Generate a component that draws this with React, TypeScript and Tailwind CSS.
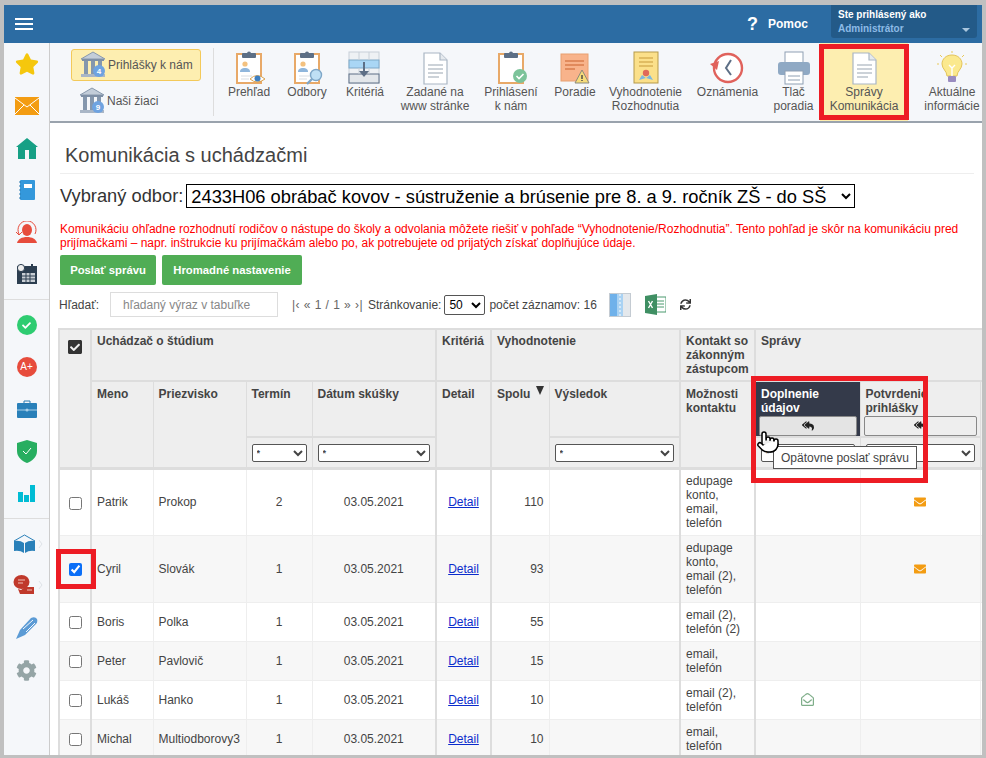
import { FaCheckSquare, FaEnvelope, FaRegEnvelopeOpen, FaReplyAll, FaSync, FaStar, FaCog, FaCheck } from 'react-icons/fa';
import { Pointer } from 'lucide-react';

const Clipboard = ({ children }: { children?: React.ReactNode }) => (
  <svg width="36" height="34" viewBox="0 0 36 34">
    <rect x="6" y="3" width="24" height="29" fill="#fff" stroke="#e8a968" strokeWidth="2" />
    <rect x="11" y="2" width="14" height="5" rx="1" fill="#5d6f86" />
    <circle cx="18" cy="2.5" r="2" fill="#5d6f86" />
    {children}
  </svg>
);

const Person = () => (
  <g>
    <circle cx="14" cy="13" r="2.6" fill="#f3c17f" />
    <path d="M9 21c0-3 2-4 5-4s5 1 5 4z" fill="#8fb6dc" />
    <path d="M10 25h11M10 28h8" stroke="#d8dde3" strokeWidth="1" />
  </g>
);

const Paper = () => (
  <svg width="36" height="34" viewBox="0 0 36 34">
    <path d="M7 2h16l7 7v24H7z" fill="#fff" stroke="#aab6c4" strokeWidth="1.2" />
    <path d="M23 2v7h7" fill="#e6eaee" stroke="#aab6c4" strokeWidth="1.2" />
    <path d="M11 14h15M11 18h15M11 22h15M11 26h11" stroke="#9aa5b1" strokeWidth="1.2" />
  </svg>
);

const Bank = ({ n }: { n: number }) => (
  <svg width="26" height="28" viewBox="0 0 26 28">
    <path d="M1 8 13 1l12 7z" fill="#c3cdd9" stroke="#8899ad" />
    <rect x="2" y="8" width="22" height="2" fill="#7f90a6" />
    <path d="M4 10h4v13H4zM11 10h4v13h-4zM18 10h4v13h-4z" fill="#8597ad" />
    <rect x="1" y="23" width="24" height="3" fill="#a9b6c6" />
    <circle cx="19" cy="20" r="6" fill="#6fa3e0" />
    <text x="19" y="23" fontSize="8" fontWeight="700" fill="#fff" textAnchor="middle">{n}</text>
  </svg>
);

const toolbarIcons: Record<string, React.ReactNode> = {
  prehlad: (
    <Clipboard>
      <Person />
      <path d="M19 28q7-7 15 0q-8 6-15 0z" fill="#fff" stroke="#d9a24f" />
      <circle cx="26.5" cy="27.5" r="3" fill="#3f7fc0" />
    </Clipboard>
  ),
  odbory: (
    <Clipboard>
      <Person />
      <circle cx="27" cy="24" r="5.5" fill="#bfe0f5" stroke="#7ea7c8" strokeWidth="1.4" />
      <path d="M23 28l-5 5" stroke="#7ea7c8" strokeWidth="2.4" />
    </Clipboard>
  ),
  kriteria: (
    <svg width="36" height="34" viewBox="0 0 36 34">
      <rect x="2" y="1" width="30" height="31" fill="#eef1f4" stroke="#c8d0d8" />
      <rect x="2" y="9" width="30" height="8" fill="#a9d6f5" stroke="#7fa9c8" />
      <rect x="2" y="23" width="30" height="9" fill="#e3e7eb" stroke="#5d6f86" />
      <path d="M12 1v8M22 1v8M12 17v6M22 17v6" stroke="#c8d0d8" />
      <path d="M17 11v11" stroke="#5d6f86" strokeWidth="2" />
      <path d="M12 20h10l-5 6z" fill="#5d6f86" />
    </svg>
  ),
  zadane: <Paper />,
  prihlaseni: (
    <Clipboard>
      <circle cx="27" cy="25" r="7" fill="#7cc39a" />
      <path d="M23.5 25l2.5 2.5 4.5-4.5" stroke="#fff" strokeWidth="1.6" fill="none" />
    </Clipboard>
  ),
  poradie: (
    <svg width="36" height="34" viewBox="0 0 36 34">
      <rect x="4" y="3" width="27" height="27" fill="#f8b38b" stroke="#e8a070" />
      <path d="M8 10h19M8 14h19M8 18h10" stroke="#d97d4e" strokeWidth="1.4" />
      <path d="M25 19l7 13H18z" fill="#f6dc7a" stroke="#8a8a7a" />
      <path d="M25 24v4M25 29v1" stroke="#444" strokeWidth="1.4" />
    </svg>
  ),
  vyhodnotenie: (
    <svg width="36" height="34" viewBox="0 0 36 34">
      <rect x="6" y="1" width="24" height="31" fill="#fbe08a" stroke="#b59a4a" />
      <path d="M11 7h14M11 11h14M11 15h14" stroke="#c79a3a" strokeWidth="1.2" />
      <path d="M11 29l3-5 4 3 4-3 3 5-7-2z" fill="#7db8e0" />
      <circle cx="18" cy="22" r="3.2" fill="#e06a5a" />
    </svg>
  ),
  oznamenia: (
    <svg width="36" height="34" viewBox="0 0 36 34">
      <circle cx="18" cy="17" r="14" fill="#fff" stroke="#e0625c" strokeWidth="2.4" />
      <path d="M21 9l-5 8 5 7" stroke="#5d6f86" strokeWidth="2" fill="none" />
      <path d="M0 13l9-3-2 9z" fill="#e0625c" />
    </svg>
  ),
  tlac: (
    <svg width="36" height="34" viewBox="0 0 36 34">
      <rect x="9" y="1" width="18" height="11" fill="#fff" stroke="#8fa0b3" />
      <rect x="2" y="11" width="32" height="13" rx="3" fill="#8fa9c4" />
      <rect x="9" y="20" width="18" height="13" fill="#fff" stroke="#8fa0b3" />
      <path d="M12 25h12M12 29h12" stroke="#8fa0b3" />
    </svg>
  ),
  spravy: <Paper />,
  aktualne: (
    <svg width="36" height="34" viewBox="0 0 36 34">
      <path d="M18 4c-6 0-10 4-10 9 0 5 5 7 5 12h10c0-5 5-7 5-12 0-5-4-9-10-9z" fill="#fbe98e" stroke="#e3c45a" />
      <path d="M15 14l3 3 3-3M18 17v8" stroke="#fff" strokeWidth="1.4" fill="none" />
      <rect x="14" y="25" width="8" height="6" rx="1" fill="#9a8cc0" />
      <path d="M18 0v2M6 4l2 2M30 4l-2 2M3 13h2M31 13h2" stroke="#e8c95a" />
    </svg>
  ),
};

const toolbarItems = [
  { key: 'prehlad', label: ['Prehľad'], cls: 'w-[58px]' },
  { key: 'odbory', label: ['Odbory'], cls: 'w-[58px]' },
  { key: 'kriteria', label: ['Kritériá'], cls: 'w-[58px]' },
  { key: 'zadane', label: ['Zadané na', 'www stránke'], cls: 'w-[78px] ml-[2px]' },
  { key: 'prihlaseni', label: ['Prihlásení', 'k nám'], cls: 'w-[62px] ml-[6px]' },
  { key: 'poradie', label: ['Poradie'], cls: 'w-[58px] ml-[4px]' },
  { key: 'vyhodnotenie', label: ['Vyhodnotenie', 'Rozhodnutia'], cls: 'w-[81px] ml-[1px]' },
  { key: 'oznamenia', label: ['Oznámenia'], cls: 'w-[83px]' },
  { key: 'tlac', label: ['Tlač', 'poradia'], cls: 'w-[49px]' },
  { key: 'spravy', label: ['Správy', 'Komunikácia'], cls: 'w-[88px] ml-[2px] bg-[#fdeeb0]' },
  { key: 'aktualne', label: ['Aktuálne', 'informácie'], cls: 'w-[64px] ml-[12px] shrink-0' },
];

const sideGroups: React.ReactNode[][] = [
  [
    <FaStar size={24} className="text-[#f5c70d]" />,
    <svg width="24" height="18" viewBox="0 0 24 18"><rect width="24" height="18" fill="#f39c12" /><path d="M0 1l12 9 12-9M0 17l9-9M24 17l-9-9" stroke="#fff" fill="none" /></svg>,
    <svg width="22" height="21" viewBox="0 0 22 21"><path d="M11 0 22 9h-2v12H2V9H0z" fill="#16a085" /><rect x="9" y="12" width="4" height="9" fill="#f5f7fa" /></svg>,
    <svg width="16" height="20" viewBox="0 0 16 20"><rect x="1" y="0" width="15" height="20" rx="1" fill="#3498db" /><path d="M5 4h8v4H5z" fill="#fff" /><path d="M0 2h2M0 6h2M0 10h2M0 14h2M0 18h2" stroke="#2a7ab0" /></svg>,
    <svg width="22" height="22" viewBox="0 0 22 22"><path d="M3 13a9 9 0 1 1 16 0" stroke="#e74c3c" fill="none" /><path d="M0 11l3 3 3-3" stroke="#e74c3c" fill="none" /><ellipse cx="11" cy="9" rx="5" ry="6" fill="#e74c3c" /><path d="M1 22c1-4 5-6 10-6s9 2 10 6z" fill="#e74c3c" /></svg>,
    <svg width="20" height="20" viewBox="0 0 20 20"><rect x="0" y="2" width="20" height="18" fill="#2c3e50" /><path d="M5 9h13v9H5z" fill="#c8ced4" /><path d="M5 12h13M5 15h13M9 9v9M13 9v9" stroke="#2c3e50" /><circle cx="4" cy="4" r="3.6" fill="#eee" stroke="#2c3e50" /><path d="M15 0v4" stroke="#2c3e50" strokeWidth="2" /></svg>,
  ],
  [
    <span className="flex h-[20px] w-[20px] items-center justify-center rounded-full bg-[#2ecc71]"><FaCheck size={9} className="text-white" /></span>,
    <span className="flex h-[20px] w-[20px] items-center justify-center rounded-full bg-[#e74c3c] text-[10px] leading-none text-white">A+</span>,
    <svg width="20" height="18" viewBox="0 0 20 18"><path d="M7 3V1h6v2" stroke="#2a7ab0" fill="none" /><rect y="3" width="20" height="15" rx="1" fill="#2980b9" /><path d="M0 10h20" stroke="#a9cfe8" /><circle cx="10" cy="10" r="1.5" fill="#a9cfe8" /></svg>,
    <svg width="20" height="23" viewBox="0 0 20 23"><path d="M10 0 20 3v8c0 6-5 10-10 12C5 21 0 17 0 11V3z" fill="#27ae60" /><path d="M6 11l3 3 5-6" stroke="#fff" fill="none" /></svg>,
    <svg width="17" height="17" viewBox="0 0 17 17"><rect y="7" width="5" height="10" fill="#00bcd4" /><rect x="6" y="10" width="5" height="7" fill="#00bcd4" /><rect x="12" y="0" width="5" height="17" fill="#00bcd4" /></svg>,
  ],
  [
    <svg width="32" height="20" viewBox="0 0 32 20" className="ml-[5px]"><path d="M1 7 11.500 1 22 7" stroke="#2980b9" fill="none" /><path d="M1 7q6-1 10 2v10q-4-3-10-2zM22 7q-6-1-10 2v10q4-3 10-2z" fill="#2980b9" /><path d="M26 6l3 4-3 4" stroke="#dfe3e8" fill="none" /></svg>,
    <svg width="32" height="22" viewBox="0 0 32 22" className="ml-[5px]"><ellipse cx="8.500" cy="7" rx="8" ry="7" fill="#c0392b" /><path d="M5 5h7M5 8h5" stroke="#f0c0b8" /><path d="M5 14l3 1 4-3h9v7H7z" fill="#c0392b" /><path d="M14 15h5" stroke="#f0c0b8" /><path d="M26 6l3 4-3 4" stroke="#dfe3e8" fill="none" /></svg>,
    <svg width="22" height="22" viewBox="0 0 22 22"><path d="M0 22l4-9L15 1q4-2 6 1 1 3-1 5L9 18z" fill="#5b9bd5" /><path d="M7 12 17 3M10 15l9-9" stroke="#f5f7fa" /></svg>,
    <FaCog size={21} className="text-[#95a5a6]" />,
  ],
];

const rows = [
  { first: 'Patrik', last: 'Prokop', term: '2', spolu: '110', kontakt: ['edupage', 'konto,', 'email,', 'telefón'], icon: 'p', h: 'h-[67px]' },
  { first: 'Cyril', last: 'Slovák', term: '1', spolu: '93', kontakt: ['edupage', 'konto,', 'email (2),', 'telefón'], icon: 'p', h: 'h-[67px]', checked: true },
  { first: 'Boris', last: 'Polka', term: '1', spolu: '55', kontakt: ['email (2),', 'telefón (2)'], h: 'h-[39px]' },
  { first: 'Peter', last: 'Pavlovič', term: '1', spolu: '15', kontakt: ['email,', 'telefón'], h: 'h-[39px]' },
  { first: 'Lukáš', last: 'Hanko', term: '1', spolu: '10', kontakt: ['email (2),', 'telefón'], icon: 'd', h: 'h-[39px]' },
  { first: 'Michal', last: 'Multiodborovy3', term: '1', spolu: '10', kontakt: ['email,', 'telefón'], h: 'h-[39px]' },
];

const th = 'border-y-2 border-y-[#ddd] bg-[#eee] p-0 px-[5px] align-top text-left text-[12px] font-bold leading-[14px] text-[#444]';
const td = 'border-y border-y-[#eee] px-[5px] text-[12px] leading-[14px] text-[#444]';
const thick = ' border-r-2 border-r-[#ddd]';
const thinHead = ' border-r border-r-[#ddd]';
const thinBody = ' border-r border-r-[#eee]';
const filter = 'block h-[18px] w-full rounded-[2px] border border-[#555] bg-white text-[9px] text-[#444]';

function Filter() {
  return (
    <select className={filter} defaultValue="*">
      <option>*</option>
    </select>
  );
}

function Table() {
  return (
    <table className="-ml-[1px] w-[923px] table-fixed border-collapse border-l-2 border-l-[#ddd]">
      <colgroup>
        <col className="w-[32px]" />
        <col className="w-[62px]" />
        <col className="w-[93px]" />
        <col className="w-[66px]" />
        <col className="w-[124px]" />
        <col className="w-[55px]" />
        <col className="w-[58px]" />
        <col className="w-[131px]" />
        <col className="w-[75px]" />
        <col className="w-[105px]" />
        <col className="w-[120px]" />
        <col className="w-[2px]" />
      </colgroup>
      <thead>
        <tr className="h-[52px]">
          <th rowSpan={3} className={th + thick + ' !px-[7px] !pt-[9px] border-b-[3px]'}>
            <FaCheckSquare size={16} className="text-[#333]" />
          </th>
          <th colSpan={4} className={th + thick + ' !pt-[4px]'}>Uchádzač o štúdium</th>
          <th className={th + thick + ' !pt-[4px]'}>Kritériá</th>
          <th colSpan={2} className={th + thick + ' !pt-[4px]'}>Vyhodnotenie</th>
          <th className={th + thick + ' !pt-[4px]'}>Kontakt so zákonným zástupcom</th>
          <th colSpan={3} className={th + ' !pt-[4px]'}>Správy</th>
        </tr>
        <tr className="h-[56px]">
          <th rowSpan={2} className={th + thinHead + ' !pt-[5px] border-b-[3px]'}>Meno</th>
          <th rowSpan={2} className={th + thinHead + ' !pt-[5px] border-b-[3px]'}>Priezvisko</th>
          <th className={th + thinHead + ' !pt-[5px]'}>Termín</th>
          <th className={th + thick + ' !pt-[5px]'}>Dátum skúšky</th>
          <th rowSpan={2} className={th + thick + ' !pt-[5px] border-b-[3px]'}>Detail</th>
          <th rowSpan={2} className={th + thinHead + ' !pt-[5px] border-b-[3px]'}>
            <span className="flex justify-between">
              Spolu
              <span className="mt-[-1px] h-0 w-0 border-x-[4.5px] border-t-[9px] border-x-transparent border-t-[#333]" />
            </span>
          </th>
          <th className={th + thick + ' !pt-[5px]'}>Výsledok</th>
          <th rowSpan={2} className={th + thick + ' !pt-[5px] border-b-[3px]'}>Možnosti kontaktu</th>
          <th className={th + thinHead + ' !bg-[#343a4a] !px-[3px] !pt-[5px] !text-white'}>
            <span className="block pl-[2px]">Doplnenie údajov</span>
            <button className="mt-[1px] flex h-[20px] w-full items-center justify-center rounded-[2px] border border-[#888] bg-[#e4e4e4] text-[#222]">
              <FaReplyAll size={12} />
            </button>
          </th>
          <th className={th + thinHead + ' !px-[3px] !pt-[5px]'}>
            <span className="block whitespace-nowrap pl-[2px]">Potvrdenie<br />prihlášky</span>
            <button className="mt-[1px] flex h-[20px] w-full items-center justify-center rounded-[2px] border border-[#888] bg-[#eee] text-[#222]">
              <FaReplyAll size={12} />
            </button>
          </th>
          <th rowSpan={2} className={th + ' border-b-[3px]'} />
        </tr>
        <tr className="h-[31px]">
          <th className={th + thinHead + ' !align-middle border-b-[3px]'}><Filter /></th>
          <th className={th + thick + ' !align-middle border-b-[3px]'}><Filter /></th>
          <th className={th + thick + ' !align-middle border-b-[3px]'}><Filter /></th>
          <th className={th + thinHead + ' !align-middle border-b-[3px]'}><Filter /></th>
          <th className={th + thinHead + ' !align-middle border-b-[3px]'}><Filter /></th>
        </tr>
      </thead>
      <tbody>
        {rows.map((r, i) => (
          <tr key={r.first} className={r.h + (i % 2 === 1 ? ' bg-[#f7f7f7]' : ' bg-white')}>
            <td className={td + thick + ' text-center'}>
              <input type="checkbox" defaultChecked={r.checked} className="align-middle accent-[#0b6ff7]" />
            </td>
            <td className={td + thinBody}>{r.first}</td>
            <td className={td + thinBody}>{r.last}</td>
            <td className={td + thinBody + ' text-center'}>{r.term}</td>
            <td className={td + thick + ' text-center'}>03.05.2021</td>
            <td className={td + thick + ' text-center'}>
              <a href="#" className="text-[#0b2ccc] underline">Detail</a>
            </td>
            <td className={td + thinBody + ' text-right'}>{r.spolu}</td>
            <td className={td + thick} />
            <td className={td + thick}>
              {r.kontakt.map((k) => (
                <div key={k}>{k}</div>
              ))}
            </td>
            <td className={td + thinBody + ' text-center'}>
              {r.icon === 'd' && <FaRegEnvelopeOpen size={13} className="mx-auto text-[#7fae8a]" />}
            </td>
            <td className={td + thinBody + ' text-center'}>
              {r.icon === 'p' && <FaEnvelope size={12} className="mx-auto text-[#f39c12]" />}
            </td>
            <td className={td} />
          </tr>
        ))}
      </tbody>
    </table>
  );
}

export default function App() {
  return (
    <div className="relative flex h-[758px] w-[986px] flex-col overflow-hidden bg-[#c0c0c0] pb-[3px] pl-[4px] pr-[4px] pt-[5px] font-['Liberation_Sans',Arial,sans-serif]">
      {/* Header */}
      <header className="flex h-[38px] shrink-0 items-center bg-[#2c6ca3] pl-[11px] pr-[5px]">
        <div className="flex w-[18px] flex-col gap-[3px]">
          <span className="h-[2px] bg-white" />
          <span className="h-[2px] bg-white" />
          <span className="h-[2px] bg-white" />
        </div>
        <span className="ml-auto text-[18px] font-bold leading-none text-white">?</span>
        <span className="ml-[10px] text-[12px] font-bold text-white">Pomoc</span>
        <div className="relative ml-[23px] h-[33px] w-[146px] self-start rounded-b-[3px] bg-[#235a88] px-[7px] pt-[3px] leading-[14px]">
          <div className="text-[10px] font-bold text-white">Ste prihlásený ako</div>
          <div className="text-[10px] font-bold text-[#8dbbe6]">Administrátor</div>
          <span className="absolute bottom-[6px] right-[7px] h-0 w-0 border-x-[4px] border-t-[4px] border-x-transparent border-t-[#a9c6de]" />
        </div>
      </header>

      <div className="flex min-h-0 flex-1">
        {/* Sidebar */}
        <aside className="w-[46px] shrink-0 border-r border-[#ccc] bg-[#f5f7fa]">
          {sideGroups.map((group, g) => (
            <div key={g} className={g < 2 ? 'border-b border-[#ddd] pb-[4px] mb-[4px] ' : ''}>
              {group.map((icon, i) => (
                <div key={i} className="flex h-[42px] items-center justify-center">{icon}</div>
              ))}
            </div>
          ))}
        </aside>

        <div className="flex min-w-0 flex-1 flex-col bg-white">
          {/* Toolbar */}
          <div className="flex h-[80px] shrink-0 overflow-hidden border-b-2 border-[#9aa3ad] bg-[#f5f7fa]">
            <div className="w-[163px] shrink-0 pl-[21px] pt-[6px]">
              <button className="flex h-[32px] w-[130px] items-center rounded-[3px] border border-[#f3c95a] bg-[#fdeeb0] pl-[8px] text-[12px] text-[#555]">
                <Bank n={4} />
                <span className="ml-[2px]">Prihlášky k nám</span>
              </button>
              <button className="mt-[4px] flex h-[32px] w-[130px] items-center pl-[8px] text-[12px] text-[#555]">
                <Bank n={9} />
                <span className="ml-[2px]">Naši žiaci</span>
              </button>
            </div>
            <div className="my-[5px] mr-[6px] w-px shrink-0 bg-[#ddd]" />
            {toolbarItems.map((item) => (
              <div key={item.key} className={'flex shrink-0 flex-col items-center pt-[8px] text-center text-[12px] leading-[14px] text-[#555] ' + item.cls}>
                <div className="h-[34px]">{toolbarIcons[item.key]}</div>
                {item.label.map((l) => (
                  <span key={l} className="whitespace-nowrap">{l}</span>
                ))}
              </div>
            ))}
          </div>

          {/* Main */}
          <main className="min-h-0 flex-1 overflow-hidden pl-[9px]">
            <div className="ml-[1px] mr-[8px] mt-[20px] border-b border-[#eee] pb-[6px]">
              <h1 className="pl-[5px] text-[20px] font-normal leading-[24px] text-[#444]">Komunikácia s uchádzačmi</h1>
            </div>
            <div className="mt-[8px] flex items-center text-[18.3px] text-[#333]">
              <label className="whitespace-nowrap pl-[1px]">Vybraný odbor:</label>
              <select className="ml-[3px] h-[24px] w-[669px] border border-black bg-white text-[18.3px] text-black">
                <option>2433H06 obrábač kovov - sústruženie a brúsenie pre 8. a 9. ročník ZŠ - do SŠ</option>
              </select>
            </div>
            <p className="mt-[13px] w-[915px] pl-[1px] text-[12px] leading-[14px] text-[#f00]">
              Komunikáciu ohľadne rozhodnutí rodičov o nástupe do školy a odvolania môžete riešiť v pohľade “Vyhodnotenie/Rozhodnutia”. Tento pohľad je skôr na komunikáciu pred prijímačkami – napr. inštrukcie ku prijímačkám alebo po, ak potrebujete od prijatých získať doplňujúce údaje.
            </p>
            <div className="ml-[1px] mt-[5px] flex gap-[6px]">
              <button className="h-[30px] w-[96px] rounded-[2px] bg-[#50ad55] text-[11.3px] font-bold text-white">Poslať správu</button>
              <button className="h-[30px] w-[140px] rounded-[2px] bg-[#50ad55] text-[11.3px] font-bold text-white">Hromadné nastavenie</button>
            </div>
            <div className="mt-[7px] flex h-[25px] items-center text-[12px] text-[#444]">
              <span className="w-[51px]">Hľadať:</span>
              <input placeholder="hľadaný výraz v tabuľke" className="h-[25px] w-[168px] border border-[#ddd] bg-white pl-[12px] text-[12px] placeholder:text-[#888]" />
              <span className="ml-[14px] text-[#666] tracking-[0.45px]">|‹ « 1 / 1 » ›|</span>
              <span className="ml-[5px]">Stránkovanie:</span>
              <select className="ml-[3px] h-[20px] w-[41px] rounded-[2px] border border-[#555] bg-white text-[12px] text-black">
                <option>50</option>
              </select>
              <span className="ml-[4px]">počet záznamov: 16</span>
              <svg width="22" height="24" viewBox="0 0 22 24" className="ml-[12px]">
                <rect width="22" height="24" fill="#c4cbd2" />
                <rect x="1" y="1" width="7" height="22" fill="#6fb1ea" />
                <rect x="8" y="1" width="6" height="22" fill="#a9d2f3" />
                <rect x="14" y="1" width="7" height="22" fill="#e4e8ec" />
                <path d="M11 1v22" stroke="#fff" strokeDasharray="2 2" />
              </svg>
              <svg width="21" height="21" viewBox="0 0 21 21" className="ml-[14px]">
                <rect x="10" y="3" width="11" height="15" fill="#fff" stroke="#4a9a6e" />
                <path d="M12 7h7M12 10h7M12 13h7" stroke="#4a9a6e" />
                <path d="M0 2 12 0v21L0 19z" fill="#3f8f63" />
                <path d="M3.500 7l4 7M7.500 7l-4 7" stroke="#fff" strokeWidth="1.4" />
              </svg>
              <FaSync size={11} className="ml-[14px] text-[#333]" />
            </div>
            <div className="mt-[11px]">
              <Table />
            </div>
          </main>
        </div>
      </div>

      {/* Tooltip, cursor and the red call-outs lie over the page */}
      <div className="absolute left-[773px] top-[446px] flex h-[23px] w-[144px] items-center justify-center border border-[#555] bg-white text-[12px] text-[#444]">
        Opätovne poslať správu
      </div>
      <Pointer size={24} fill="#fff" strokeWidth={1.5} className="absolute left-[756px] top-[430px] text-black" />
      <div className="absolute left-[819px] top-[44px] h-[76px] w-[90px] border-[5px] border-[#ed1c24]" />
      <div className="absolute left-[751px] top-[376px] h-[107px] w-[177px] border-[5px] border-[#ed1c24]" />
      <div className="absolute left-[56px] top-[549px] h-[40px] w-[40px] border-[5px] border-[#ed1c24]" />
    </div>
  );
}
